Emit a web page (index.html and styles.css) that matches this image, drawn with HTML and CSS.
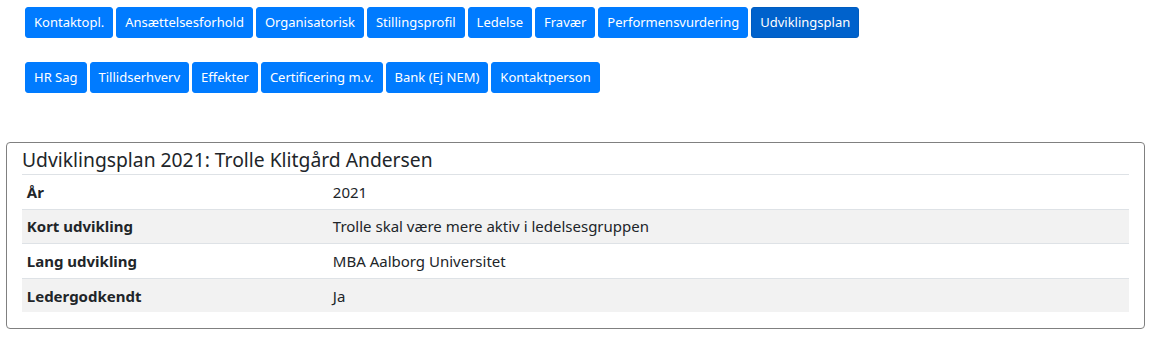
FILE: index.html
```html
<!DOCTYPE html>
<html lang="da">
<head>
<meta charset="utf-8">
<title>Udviklingsplan</title>
<link rel="stylesheet" href="styles.css">
</head>
<body>
<nav class="tabs">
  <div class="tab-row">
    <a class="btn">Kontaktopl.</a>
    <a class="btn">Ansættelsesforhold</a>
    <a class="btn">Organisatorisk</a>
    <a class="btn">Stillingsprofil</a>
    <a class="btn">Ledelse</a>
    <a class="btn">Fravær</a>
    <a class="btn">Performensvurdering</a>
    <a class="btn active">Udviklingsplan</a>
  </div>
  <div class="tab-row">
    <a class="btn">HR Sag</a>
    <a class="btn">Tillidserhverv</a>
    <a class="btn">Effekter</a>
    <a class="btn">Certificering m.v.</a>
    <a class="btn">Bank (Ej NEM)</a>
    <a class="btn">Kontaktperson</a>
  </div>
</nav>
<section class="card">
  <h4 class="card-title">Udviklingsplan 2021: Trolle Klitgård Andersen</h4>
  <table class="info">
    <tr><th>År</th><td>2021</td></tr>
    <tr><th>Kort udvikling</th><td>Trolle skal være mere aktiv i ledelsesgruppen</td></tr>
    <tr><th>Lang udvikling</th><td>MBA Aalborg Universitet</td></tr>
    <tr><th>Ledergodkendt</th><td>Ja</td></tr>
  </table>
</section>
</body>
</html>
```
FILE: styles.css
```css
* { box-sizing: border-box; }
body {
  margin: 0;
  background: #fff;
  color: #212529;
  font-family: "Noto Sans", "Open Sans", sans-serif;
  font-size: 15px;
}
.tabs {
  padding: 7px 0 0 25px;
  display: flex;
  flex-direction: column;
  gap: 24px;
}
.tab-row {
  display: flex;
  gap: 3px;
}
.btn {
  display: inline-block;
  background: #007bff;
  color: #fff;
  border: 1px solid #007bff;
  border-radius: 3px;
  font-size: 13px;
  line-height: 21px;
  padding: 4px 8px;
  text-decoration: none;
  white-space: nowrap;
}
.btn.active {
  background: #0062cc;
  border-color: #005cbf;
}
.card {
  margin: 49px 10px 0 6px;
  border: 1px solid #808080;
  border-radius: 4px;
  padding: 0 15px 16px 15px;
}
.card-title {
  margin: 0;
  font-size: 19.3px;
  font-weight: 400;
  line-height: 31px;
  padding-top: 1px;
  height: 31px;
}
.info {
  width: 100%;
  border-collapse: collapse;
}
.info th, .info td {
  border-top: 1px solid #dee2e6;
  padding: 4.8px;
  line-height: 24px;
  text-align: left;
  vertical-align: top;
}
.info th {
  width: 306px;
  font-weight: 700;
}
.info tr:nth-child(even) { background: #f2f2f2; }
```
